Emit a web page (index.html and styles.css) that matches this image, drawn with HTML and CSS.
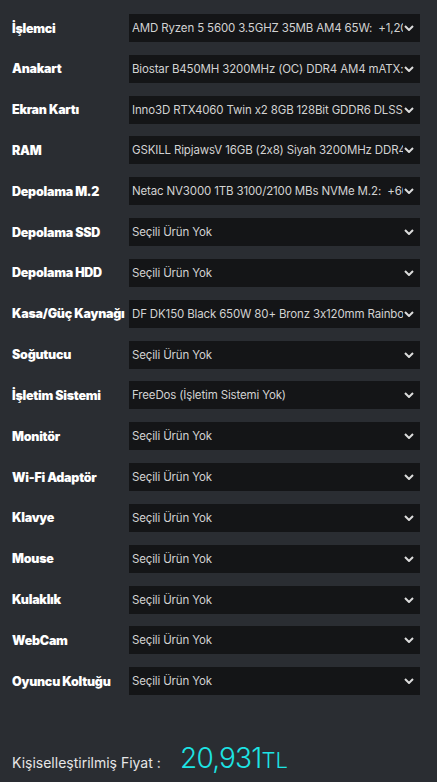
FILE: index.html
```html
<!DOCTYPE html>
<html lang="tr">
<head>
<meta charset="utf-8">
<title>Sistem Toplama</title>
<link rel="stylesheet" href="styles.css">
</head>
<body>
<div class="builder">
  <div class="rows">
    <div class="row"><div class="label">İşlemci</div><div class="select"><span class="value">AMD Ryzen 5 5600 3.5GHZ 35MB AM4 65W:&nbsp; +1,200TL</span><svg class="chev" viewBox="0 0 10 6"><path d="M1 1l4 4 4-4"/></svg></div></div>
    <div class="row"><div class="label">Anakart</div><div class="select"><span class="value">Biostar B450MH 3200MHz (OC) DDR4 AM4 mATX:&nbsp; +1,500TL</span><svg class="chev" viewBox="0 0 10 6"><path d="M1 1l4 4 4-4"/></svg></div></div>
    <div class="row"><div class="label">Ekran Kartı</div><div class="select"><span class="value">Inno3D RTX4060 Twin x2 8GB 128Bit GDDR6 DLSS 3:&nbsp; +10,000TL</span><svg class="chev" viewBox="0 0 10 6"><path d="M1 1l4 4 4-4"/></svg></div></div>
    <div class="row"><div class="label">RAM</div><div class="select"><span class="value">GSKILL RipjawsV 16GB (2x8) Siyah 3200MHz DDR4:&nbsp; +900TL</span><svg class="chev" viewBox="0 0 10 6"><path d="M1 1l4 4 4-4"/></svg></div></div>
    <div class="row"><div class="label">Depolama M.2</div><div class="select"><span class="value">Netac NV3000 1TB 3100/2100 MBs NVMe M.2:&nbsp; +600TL</span><svg class="chev" viewBox="0 0 10 6"><path d="M1 1l4 4 4-4"/></svg></div></div>
    <div class="row"><div class="label">Depolama SSD</div><div class="select"><span class="value">Seçili Ürün Yok</span><svg class="chev" viewBox="0 0 10 6"><path d="M1 1l4 4 4-4"/></svg></div></div>
    <div class="row"><div class="label">Depolama HDD</div><div class="select"><span class="value">Seçili Ürün Yok</span><svg class="chev" viewBox="0 0 10 6"><path d="M1 1l4 4 4-4"/></svg></div></div>
    <div class="row"><div class="label">Kasa/Güç Kaynağı</div><div class="select"><span class="value">DF DK150 Black 650W 80+ Bronz 3x120mm Rainbow Fan:&nbsp; +800TL</span><svg class="chev" viewBox="0 0 10 6"><path d="M1 1l4 4 4-4"/></svg></div></div>
    <div class="row"><div class="label">Soğutucu</div><div class="select"><span class="value">Seçili Ürün Yok</span><svg class="chev" viewBox="0 0 10 6"><path d="M1 1l4 4 4-4"/></svg></div></div>
    <div class="row"><div class="label">İşletim Sistemi</div><div class="select"><span class="value">FreeDos (İşletim Sistemi Yok)</span><svg class="chev" viewBox="0 0 10 6"><path d="M1 1l4 4 4-4"/></svg></div></div>
    <div class="row"><div class="label">Monitör</div><div class="select"><span class="value">Seçili Ürün Yok</span><svg class="chev" viewBox="0 0 10 6"><path d="M1 1l4 4 4-4"/></svg></div></div>
    <div class="row"><div class="label">Wi-Fi Adaptör</div><div class="select"><span class="value">Seçili Ürün Yok</span><svg class="chev" viewBox="0 0 10 6"><path d="M1 1l4 4 4-4"/></svg></div></div>
    <div class="row"><div class="label">Klavye</div><div class="select"><span class="value">Seçili Ürün Yok</span><svg class="chev" viewBox="0 0 10 6"><path d="M1 1l4 4 4-4"/></svg></div></div>
    <div class="row"><div class="label">Mouse</div><div class="select"><span class="value">Seçili Ürün Yok</span><svg class="chev" viewBox="0 0 10 6"><path d="M1 1l4 4 4-4"/></svg></div></div>
    <div class="row"><div class="label">Kulaklık</div><div class="select"><span class="value">Seçili Ürün Yok</span><svg class="chev" viewBox="0 0 10 6"><path d="M1 1l4 4 4-4"/></svg></div></div>
    <div class="row"><div class="label">WebCam</div><div class="select"><span class="value">Seçili Ürün Yok</span><svg class="chev" viewBox="0 0 10 6"><path d="M1 1l4 4 4-4"/></svg></div></div>
    <div class="row"><div class="label">Oyuncu Koltuğu</div><div class="select"><span class="value">Seçili Ürün Yok</span><svg class="chev" viewBox="0 0 10 6"><path d="M1 1l4 4 4-4"/></svg></div></div>
  </div>
  <div class="price">
    <span class="price-label">Kişiselleştirilmiş Fiyat :</span>
    <span class="price-value">20,931<span class="currency">TL</span></span>
  </div>
</div>
</body>
</html>
```

FILE: styles.css
```css
html, body {
  margin: 0;
  padding: 0;
}
body {
  background: #2a2d32;
  font-family: "Inter", "Noto Sans", sans-serif;
  color: #e6e6e6;
  width: 437px;
  height: 782px;
  overflow: hidden;
}
.builder {
  padding: 14px 17px 0 12px;
}
.rows {
  display: flex;
  flex-direction: column;
  gap: 12.83px;
}
.row {
  display: flex;
  align-items: center;
  height: 28px;
}
.label {
  width: 117px;
  flex: none;
  font-size: 12.5px;
  font-weight: 900;
  color: #ffffff;
  white-space: nowrap;
  letter-spacing: -0.25px;
}
.select {
  flex: 1;
  height: 28px;
  background: #141517;
  display: flex;
  align-items: center;
  padding: 0 6px 0 3px;
  min-width: 0;
}
.value {
  flex: 1;
  min-width: 0;
  overflow: hidden;
  white-space: nowrap;
  font-size: 11.5px;
  color: #d2d2d2;
  letter-spacing: -0.15px;
}
.chev {
  flex: none;
  width: 10px;
  height: 6px;
  margin-left: 1px;
  fill: none;
  stroke: #dcdcdc;
  stroke-width: 2;
}
.price {
  display: flex;
  align-items: baseline;
  margin-top: 46px;
}
.price-label {
  width: 168px;
  flex: none;
  font-size: 14px;
  color: #e6e6e6;
}
.price-value {
  font-size: 28px;
  font-weight: 300;
  color: #1de4e4;
  letter-spacing: -0.8px;
}
.currency {
  font-size: 22px;
  letter-spacing: 0;
}
```
